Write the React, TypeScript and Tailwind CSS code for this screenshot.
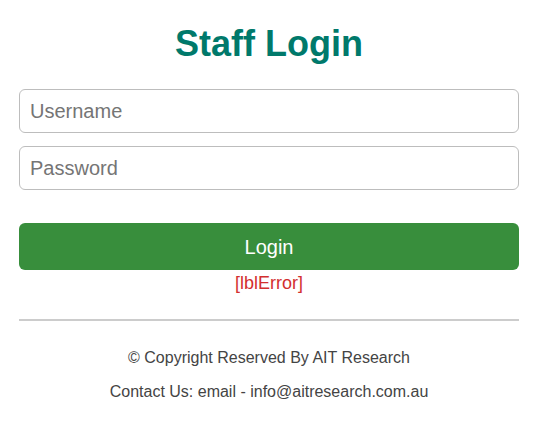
import { useState } from 'react';

function App() {
    const [username, setUsername] = useState('');
    const [password, setPassword] = useState('');

    return (
        <div className="min-h-screen bg-white font-['Liberation_Sans',Arial,sans-serif]">
            <div className="ml-[19px] w-[500px]">
                {/* Title */}
                <h1 className="pt-[23px] text-center text-[36px] font-bold leading-[41px] text-[#00796b]">
                    Staff Login
                </h1>

                {/* Form */}
                <div className="mt-[25px] flex flex-col gap-[13px]">
                    <input
                        value={username}
                        onChange={(e) => setUsername(e.target.value)}
                        placeholder="Username"
                        className="h-[44px] w-full rounded-[6px] border border-[#bdbdbd] px-[10px] text-[20px] text-[#333] outline-none placeholder:text-[#757575]"
                    />
                    <input
                        type="password"
                        value={password}
                        onChange={(e) => setPassword(e.target.value)}
                        placeholder="Password"
                        className="h-[44px] w-full rounded-[6px] border border-[#bdbdbd] px-[10px] text-[20px] text-[#333] outline-none placeholder:text-[#757575]"
                    />
                </div>

                <button className="mt-[33px] h-[47px] w-full rounded-[6px] bg-[#388e3c] text-[20px] text-white">
                    Login
                </button>

                <div className="mt-[3px] text-center text-[18px] leading-[21px] text-[#d32f2f]">
                    [lblError]
                </div>

                <hr className="mt-[25px] border-t-2 border-[#cccccc]" />

                {/* Footer */}
                <div className="mt-[27px] flex flex-col gap-[15px] text-center text-[16px] leading-[19px] text-[#444]">
                    <p>© Copyright Reserved By AIT Research</p>
                    <p>Contact Us: email - info@aitresearch.com.au</p>
                </div>
            </div>
        </div>
    );
}

export default App;
